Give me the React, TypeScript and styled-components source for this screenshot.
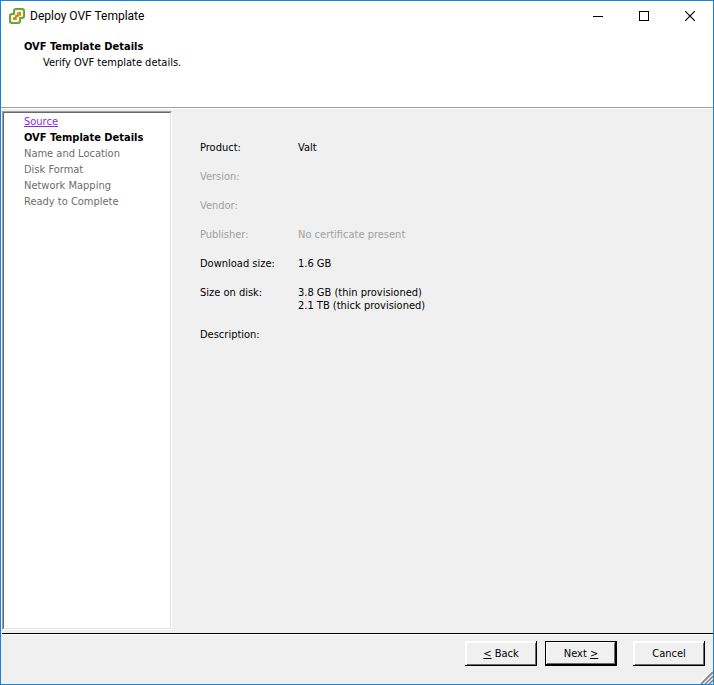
import React from "react";
import styled, { createGlobalStyle } from "styled-components";

const GlobalStyle = createGlobalStyle`
  *, *::before, *::after { box-sizing: border-box; }
  body {
    margin: 0;
    background: #f0f0f0;
    color: #000;
    font: 11px/13px "DejaVu Sans Condensed", Tahoma, "DejaVu Sans", sans-serif;
  }
  button { font: inherit; color: inherit; }
`;

const Window = styled.main`
  position: relative;
  display: flex;
  flex-direction: column;
  min-height: 100vh;
  border: 1px solid #1883d7;
  background: #f0f0f0;
`;

const TitleBar = styled.header`
  display: flex;
  align-items: center;
  height: 29px;
  padding-left: 8px;
  background: #fff;
`;

const WindowTitle = styled.h1`
  flex: 1;
  margin: 0 0 0 5px;
  font: 400 12px/16px Roboto, "Segoe UI", sans-serif;
`;

const CaptionButton = styled.button`
  display: flex;
  align-items: center;
  justify-content: center;
  width: 46px;
  height: 29px;
  padding: 0;
  border: 0;
  background: transparent;
`;

const PageHeader = styled.section`
  height: 78px;
  padding: 9px 23px;
  border-bottom: 1px solid #a0a0a0;
  background: #fff;
`;

const PageTitle = styled.h2`
  margin: 0;
  font-size: 11px;
  line-height: 16px;
`;

const PageSubtitle = styled.p`
  margin: 0 0 0 19px;
  line-height: 16px;
`;

const Content = styled.div`
  flex: 1;
  display: flex;
  padding: 2px 0 3px 1px;
  border-top: 1px solid #fff;
`;

const Sidebar = styled.nav`
  flex: none;
  width: 170px;
  display: flex;
  border: 1px solid;
  border-color: #a0a0a0 #fff #fff #a0a0a0;
`;

const StepList = styled.ol`
  flex: 1;
  margin: 0;
  padding: 1px 0 0 20px;
  list-style: none;
  background: #fff;
  border: 1px solid;
  border-color: #696969 #e3e3e3 #e3e3e3 #696969;
`;

const Step = styled.li<{ $current?: boolean }>`
  height: 16px;
  line-height: 16px;
  white-space: nowrap;
  color: ${(p) => (p.$current ? "#000" : "#6d6d6d")};
  font-weight: ${(p) => (p.$current ? 700 : 400)};
`;

const StepLink = styled.a`
  color: #8a2be2;
`;

const Details = styled.dl`
  flex: 1;
  display: flex;
  flex-direction: column;
  gap: 16px;
  margin: 0;
  padding: 30px 28px;
`;

const DetailRow = styled.div<{ $muted?: boolean }>`
  display: grid;
  grid-template-columns: 98px 1fr;
  color: ${(p) => (p.$muted ? "#a0a0a0" : "#000")};
`;

const DetailLabel = styled.dt`
  white-space: nowrap;
`;

const DetailValue = styled.dd`
  grid-column: 2;
  margin: 0;
`;

const Footer = styled.footer`
  display: flex;
  justify-content: flex-end;
  gap: 8px;
  height: 51px;
  margin-left: 1px;
  padding: 7px 8px 0;
  border-top: 1px solid #000;
  box-shadow: inset 0 1px #fff;
`;

const PushButton = styled.button<{ $primary?: boolean; $apart?: boolean }>`
  width: 72px;
  height: 25px;
  margin-left: ${(p) => (p.$apart ? "8px" : "0")};
  padding: 0;
  background: #f0f0f0;
  border: ${(p) => (p.$primary ? "1px solid #000" : "0")};
  box-shadow: ${(p) =>
    p.$primary
      ? "inset -1px -1px #000, inset 1px 1px #fff, inset -2px -2px #696969"
      : "inset -1px -1px #000, inset 2px 2px #fff, inset -2px -2px #696969"};
`;

const Key = styled.u`
  text-underline-offset: 1px;
`;

const Grip = styled.svg`
  position: absolute;
  right: 0;
  bottom: 0;
`;

const Logo = () => (
  <svg width="16" height="16" viewBox="0 0 16 16" aria-hidden="true">
    <path
      d="M7 1h6q2 0 2 2v5q0 2-2 2h-2v3q0 2-2 2H3q-2 0-2-2V8q0-2 2-2h2V3q0-2 2-2z"
      fill="#fff"
      stroke="#64a02c"
      strokeWidth="2"
    />
    <path d="M6 3q0-1 1-1h6q1 0 1 1v5q0 1-1 1h-3v4q0 1-1 1H3q-1 0-1-1V8q0-1 1-1h3z" fill="none" stroke="#a9cf7c" strokeWidth=".6" />
    <path d="M8 4h4v4h-2v1H8v3H4V9h2V7h2z" fill="#f0a030" />
    <path d="M9 4h3v3h-2zM4 10l3-1v3H4z" fill="#d9820f" />
    <path d="M6 9h1V8h1V7h1" fill="none" stroke="#b96d10" />
  </svg>
);

const steps = ["Name and Location", "Disk Format", "Network Mapping", "Ready to Complete"];

const details: { label: string; values: string[]; muted?: boolean }[] = [
  { label: "Product:", values: ["Valt"] },
  { label: "Version:", values: [], muted: true },
  { label: "Vendor:", values: [], muted: true },
  { label: "Publisher:", values: ["No certificate present"], muted: true },
  { label: "Download size:", values: ["1.6 GB"] },
  { label: "Size on disk:", values: ["3.8 GB (thin provisioned)", "2.1 TB (thick provisioned)"] },
  { label: "Description:", values: [] },
];

export default function App() {
  return (
    <>
      <GlobalStyle />
      <Window>
        <TitleBar>
          <Logo />
          <WindowTitle>Deploy OVF Template</WindowTitle>
          <CaptionButton type="button" aria-label="Minimize">
            <svg width="10" height="10" shapeRendering="crispEdges">
              <path d="M0 5.5h10" stroke="#000" />
            </svg>
          </CaptionButton>
          <CaptionButton type="button" aria-label="Maximize">
            <svg width="10" height="10" shapeRendering="crispEdges">
              <path d="M.5.5h9v9h-9z" fill="none" stroke="#000" />
            </svg>
          </CaptionButton>
          <CaptionButton type="button" aria-label="Close">
            <svg width="10" height="10">
              <path d="M0 0l10 10M10 0L0 10" stroke="#000" strokeWidth="1.2" />
            </svg>
          </CaptionButton>
        </TitleBar>
        <PageHeader>
          <PageTitle>OVF Template Details</PageTitle>
          <PageSubtitle>Verify OVF template details.</PageSubtitle>
        </PageHeader>
        <Content>
          <Sidebar aria-label="Wizard steps">
            <StepList>
              <Step>
                <StepLink href="#source">Source</StepLink>
              </Step>
              <Step $current aria-current="step">
                OVF Template Details
              </Step>
              {steps.map((step) => (
                <Step key={step}>{step}</Step>
              ))}
            </StepList>
          </Sidebar>
          <Details>
            {details.map(({ label, values, muted }) => (
              <DetailRow key={label} $muted={muted}>
                <DetailLabel>{label}</DetailLabel>
                {values.map((value, i) => (
                  <DetailValue key={i}>{value}</DetailValue>
                ))}
              </DetailRow>
            ))}
          </Details>
        </Content>
        <Footer>
          <PushButton type="button">
            <Key>&lt;</Key> Back
          </PushButton>
          <PushButton type="button" $primary>
            Next <Key>&gt;</Key>
          </PushButton>
          <PushButton type="button" $apart>
            Cancel
          </PushButton>
        </Footer>
        <Grip width="13" height="13" aria-hidden="true">
          <path d="M1 13 13 1M5 13l8-8M9 13l4-4" stroke="#8a8a8a" strokeWidth="2" />
          <path d="M0 12 12 0M4 12.5l8.500-8.500M8 12.5l4.500-4.500" stroke="#fff" />
        </Grip>
      </Window>
    </>
  );
}
